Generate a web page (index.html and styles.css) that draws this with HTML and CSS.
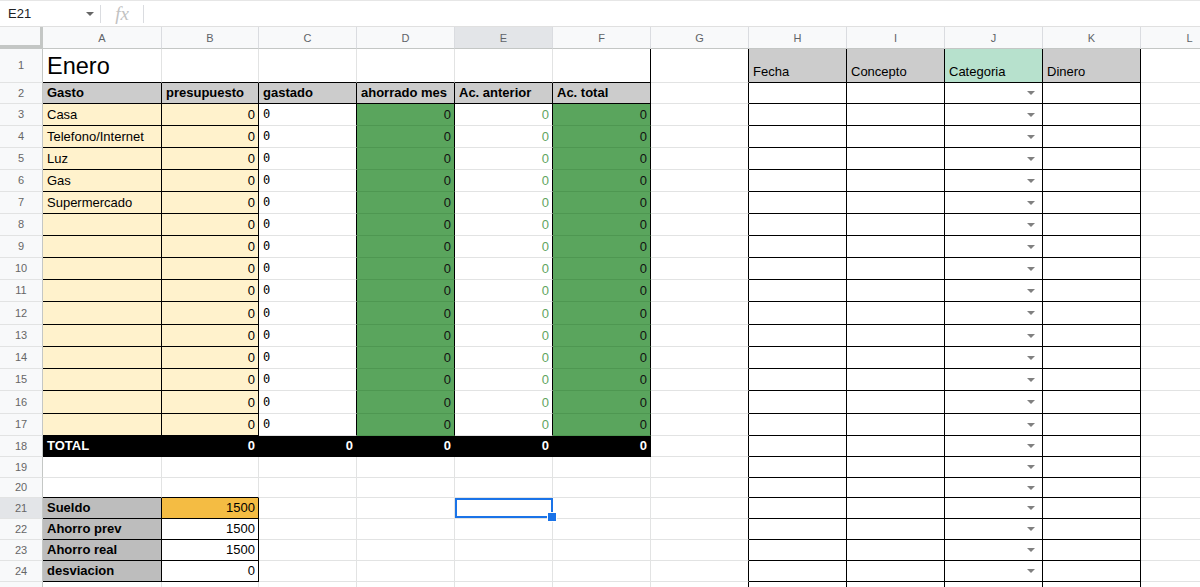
FILE: index.html
```html
<!DOCTYPE html>
<html lang="es">
<head>
<meta charset="utf-8">
<title>Enero</title>
<link rel="stylesheet" href="styles.css">
</head>
<body>
<div class="fbar">
  <div class="namebox"><span>E21</span><span class="nb-arrow"></span></div>
  <div class="sep"></div>
  <div class="fx">fx</div>
  <div class="sep"></div>
</div>
<div class="sheet">
  <div class="corner"></div><div class="ch">A</div><div class="ch">B</div><div class="ch">C</div><div class="ch">D</div><div class="ch hl">E</div><div class="ch">F</div><div class="ch">G</div><div class="ch">H</div><div class="ch">I</div><div class="ch">J</div><div class="ch">K</div><div class="ch">L</div>

  <div class="rh">1</div><div class="c b big">Enero</div><div class="c b"></div><div class="c b"></div><div class="c b"></div><div class="c b"></div><div class="c b r"></div><div class="c r"></div><div class="c hd r b">Fecha</div><div class="c hd r b">Concepto</div><div class="c lg r b">Categoria</div><div class="c hd r b">Dinero</div><div class="c"></div>

  <div class="rh">2</div><div class="c gr bd r b">Gasto</div><div class="c gr bd r b">presupuesto</div><div class="c gr bd r b">gastado</div><div class="c gr bd r b">ahorrado mes</div><div class="c gr bd r b">Ac. anterior</div><div class="c gr bd r b">Ac. total</div><div class="c r"></div><div class="c r b"></div><div class="c r b"></div><div class="c r b dd"><span class="arr"></span></div><div class="c r b"></div><div class="c"></div>

  <div class="rh">3</div><div class="c y r b">Casa</div><div class="c y r b n">0</div><div class="c r m">0</div><div class="c g r n">0</div><div class="c r n gt">0</div><div class="c g r n">0</div><div class="c r"></div><div class="c r b"></div><div class="c r b"></div><div class="c r b dd"><span class="arr"></span></div><div class="c r b"></div><div class="c"></div>

  <div class="rh">4</div><div class="c y r b">Telefono/Internet</div><div class="c y r b n">0</div><div class="c r m">0</div><div class="c g r n">0</div><div class="c r n gt">0</div><div class="c g r n">0</div><div class="c r"></div><div class="c r b"></div><div class="c r b"></div><div class="c r b dd"><span class="arr"></span></div><div class="c r b"></div><div class="c"></div>

  <div class="rh">5</div><div class="c y r b">Luz</div><div class="c y r b n">0</div><div class="c r m">0</div><div class="c g r n">0</div><div class="c r n gt">0</div><div class="c g r n">0</div><div class="c r"></div><div class="c r b"></div><div class="c r b"></div><div class="c r b dd"><span class="arr"></span></div><div class="c r b"></div><div class="c"></div>

  <div class="rh">6</div><div class="c y r b">Gas</div><div class="c y r b n">0</div><div class="c r m">0</div><div class="c g r n">0</div><div class="c r n gt">0</div><div class="c g r n">0</div><div class="c r"></div><div class="c r b"></div><div class="c r b"></div><div class="c r b dd"><span class="arr"></span></div><div class="c r b"></div><div class="c"></div>

  <div class="rh">7</div><div class="c y r b">Supermercado</div><div class="c y r b n">0</div><div class="c r m">0</div><div class="c g r n">0</div><div class="c r n gt">0</div><div class="c g r n">0</div><div class="c r"></div><div class="c r b"></div><div class="c r b"></div><div class="c r b dd"><span class="arr"></span></div><div class="c r b"></div><div class="c"></div>

  <div class="rh">8</div><div class="c y r b"></div><div class="c y r b n">0</div><div class="c r m">0</div><div class="c g r n">0</div><div class="c r n gt">0</div><div class="c g r n">0</div><div class="c r"></div><div class="c r b"></div><div class="c r b"></div><div class="c r b dd"><span class="arr"></span></div><div class="c r b"></div><div class="c"></div>

  <div class="rh">9</div><div class="c y r b"></div><div class="c y r b n">0</div><div class="c r m">0</div><div class="c g r n">0</div><div class="c r n gt">0</div><div class="c g r n">0</div><div class="c r"></div><div class="c r b"></div><div class="c r b"></div><div class="c r b dd"><span class="arr"></span></div><div class="c r b"></div><div class="c"></div>

  <div class="rh">10</div><div class="c y r b"></div><div class="c y r b n">0</div><div class="c r m">0</div><div class="c g r n">0</div><div class="c r n gt">0</div><div class="c g r n">0</div><div class="c r"></div><div class="c r b"></div><div class="c r b"></div><div class="c r b dd"><span class="arr"></span></div><div class="c r b"></div><div class="c"></div>

  <div class="rh">11</div><div class="c y r b"></div><div class="c y r b n">0</div><div class="c r m">0</div><div class="c g r n">0</div><div class="c r n gt">0</div><div class="c g r n">0</div><div class="c r"></div><div class="c r b"></div><div class="c r b"></div><div class="c r b dd"><span class="arr"></span></div><div class="c r b"></div><div class="c"></div>

  <div class="rh">12</div><div class="c y r b"></div><div class="c y r b n">0</div><div class="c r m">0</div><div class="c g r n">0</div><div class="c r n gt">0</div><div class="c g r n">0</div><div class="c r"></div><div class="c r b"></div><div class="c r b"></div><div class="c r b dd"><span class="arr"></span></div><div class="c r b"></div><div class="c"></div>

  <div class="rh">13</div><div class="c y r b"></div><div class="c y r b n">0</div><div class="c r m">0</div><div class="c g r n">0</div><div class="c r n gt">0</div><div class="c g r n">0</div><div class="c r"></div><div class="c r b"></div><div class="c r b"></div><div class="c r b dd"><span class="arr"></span></div><div class="c r b"></div><div class="c"></div>

  <div class="rh">14</div><div class="c y r b"></div><div class="c y r b n">0</div><div class="c r m">0</div><div class="c g r n">0</div><div class="c r n gt">0</div><div class="c g r n">0</div><div class="c r"></div><div class="c r b"></div><div class="c r b"></div><div class="c r b dd"><span class="arr"></span></div><div class="c r b"></div><div class="c"></div>

  <div class="rh">15</div><div class="c y r b"></div><div class="c y r b n">0</div><div class="c r m">0</div><div class="c g r n">0</div><div class="c r n gt">0</div><div class="c g r n">0</div><div class="c r"></div><div class="c r b"></div><div class="c r b"></div><div class="c r b dd"><span class="arr"></span></div><div class="c r b"></div><div class="c"></div>

  <div class="rh">16</div><div class="c y r b"></div><div class="c y r b n">0</div><div class="c r m">0</div><div class="c g r n">0</div><div class="c r n gt">0</div><div class="c g r n">0</div><div class="c r"></div><div class="c r b"></div><div class="c r b"></div><div class="c r b dd"><span class="arr"></span></div><div class="c r b"></div><div class="c"></div>

  <div class="rh">17</div><div class="c y r b"></div><div class="c y r b n">0</div><div class="c r m">0</div><div class="c g r n">0</div><div class="c r n gt">0</div><div class="c g r n">0</div><div class="c r"></div><div class="c r b"></div><div class="c r b"></div><div class="c r b dd"><span class="arr"></span></div><div class="c r b"></div><div class="c"></div>

  <div class="rh">18</div><div class="c k">TOTAL</div><div class="c k n">0</div><div class="c k n">0</div><div class="c k n">0</div><div class="c k n">0</div><div class="c k n">0</div><div class="c r"></div><div class="c r b"></div><div class="c r b"></div><div class="c r b dd"><span class="arr"></span></div><div class="c r b"></div><div class="c"></div>

  <div class="rh">19</div><div class="c"></div><div class="c"></div><div class="c"></div><div class="c"></div><div class="c"></div><div class="c"></div><div class="c r"></div><div class="c r b"></div><div class="c r b"></div><div class="c r b dd"><span class="arr"></span></div><div class="c r b"></div><div class="c"></div>

  <div class="rh">20</div><div class="c b"></div><div class="c b"></div><div class="c"></div><div class="c"></div><div class="c"></div><div class="c"></div><div class="c r"></div><div class="c r b"></div><div class="c r b"></div><div class="c r b dd"><span class="arr"></span></div><div class="c r b"></div><div class="c"></div>

  <div class="rh hl">21</div><div class="c dg bd r b">Sueldo</div><div class="c o r b n">1500</div><div class="c"></div><div class="c"></div><div class="c sel"></div><div class="c"></div><div class="c r"></div><div class="c r b"></div><div class="c r b"></div><div class="c r b dd"><span class="arr"></span></div><div class="c r b"></div><div class="c"></div>

  <div class="rh">22</div><div class="c dg bd r b">Ahorro prev</div><div class="c r b n">1500</div><div class="c"></div><div class="c"></div><div class="c"></div><div class="c"></div><div class="c r"></div><div class="c r b"></div><div class="c r b"></div><div class="c r b dd"><span class="arr"></span></div><div class="c r b"></div><div class="c"></div>

  <div class="rh">23</div><div class="c dg bd r b">Ahorro real</div><div class="c r b n">1500</div><div class="c"></div><div class="c"></div><div class="c"></div><div class="c"></div><div class="c r"></div><div class="c r b"></div><div class="c r b"></div><div class="c r b dd"><span class="arr"></span></div><div class="c r b"></div><div class="c"></div>

  <div class="rh">24</div><div class="c dg bd r b">desviacion</div><div class="c r b n">0</div><div class="c"></div><div class="c"></div><div class="c"></div><div class="c"></div><div class="c r"></div><div class="c r b"></div><div class="c r b"></div><div class="c r b dd"><span class="arr"></span></div><div class="c r b"></div><div class="c"></div>

  <div class="rh">25</div><div class="c"></div><div class="c"></div><div class="c"></div><div class="c"></div><div class="c"></div><div class="c"></div><div class="c r"></div><div class="c r b"></div><div class="c r b"></div><div class="c r b dd"><span class="arr"></span></div><div class="c r b"></div><div class="c"></div>
</div>
</body>
</html>
```

FILE: styles.css
```css
* { box-sizing: border-box; }
html, body { margin: 0; padding: 0; }
body {
  width: 1200px;
  height: 587px;
  overflow: hidden;
  background: #fff;
  color: #000;
  font-family: "Liberation Sans", Arial, sans-serif;
}

/* formula bar */
.fbar {
  height: 27px;
  display: flex;
  align-items: center;
  border-top: 1px solid #e6e6e6;
  border-bottom: 1px solid #e0e0e0;
}
.namebox {
  width: 100px;
  display: flex;
  align-items: center;
  justify-content: space-between;
  padding: 0 6px 0 8px;
  font-size: 13px;
  color: #202124;
}
.nb-arrow {
  width: 0;
  height: 0;
  border-left: 4px solid transparent;
  border-right: 4px solid transparent;
  border-top: 4px solid #666;
}
.sep { width: 1px; height: 18px; background: #dadce0; }
.fx {
  width: 42px;
  text-align: center;
  font-family: "Liberation Serif", serif;
  font-style: italic;
  font-size: 19px;
  line-height: 20px;
  color: #c2c2c2;
}

/* grid */
.sheet {
  display: grid;
  grid-template-columns: 43px 119px 97px repeat(10, 98px);
  grid-template-rows: 22px 34px 21px repeat(9, 22px) 23px repeat(3, 22px) 23px 22px 21px 21px 20px 21px 21px 21px 21px 21px;
}
.corner {
  background: #f8f9fa;
  border-right: 3px solid #c4c7c5;
  border-bottom: 4px solid #c4c7c5;
}
.ch {
  background: #f8f9fa;
  border-right: 1px solid #dadce0;
  border-bottom: 1px solid #c4c7c5;
  display: flex;
  align-items: center;
  justify-content: center;
  font-size: 11px;
  color: #5f6368;
}
.rh {
  background: #f8f9fa;
  border-right: 1px solid #c4c7c5;
  border-bottom: 1px solid #e2e3e3;
  display: flex;
  align-items: center;
  justify-content: center;
  font-size: 11px;
  color: #666;
  padding-bottom: 1px;
  overflow: hidden;
}
.hl { background: #e3e5e8; }

.c {
  border-right: 1px solid #e2e3e3;
  border-bottom: 1px solid #e2e3e3;
  display: flex;
  align-items: flex-end;
  padding: 0 3px 3px 4px;
  font-size: 13px;
  line-height: 15px;
  white-space: nowrap;
  overflow: hidden;
}
.n { justify-content: flex-end; }
.y { background: #fff2cc; }
.g { background: #5aa55d; border-bottom-color: #4e9751; color: #111; }
.gr { background: #cccccc; }
.hd { background: #cccccc; }
.dg { background: #bdbdbd; }
.o { background: #f4bc43; }
.lg { background: #b7e1cd; }
.k {
  background: #000;
  color: #fff;
  font-weight: bold;
  border-right-color: #000;
  border-bottom-color: #000;
}
.bd { font-weight: bold; }
.r { border-right-color: #000; }
.b { border-bottom-color: #000; }
.m { font-family: "DejaVu Sans Mono", monospace; font-size: 12px; }
.gt { color: #5fa560; }
.big { font-size: 23.5px; line-height: 27px; padding-bottom: 2px; }

.dd { justify-content: flex-end; align-items: center; padding: 0 7px 0 0; }
.arr {
  width: 0;
  height: 0;
  border-left: 4px solid transparent;
  border-right: 4px solid transparent;
  border-top: 4px solid #808080;
}

.sel { position: relative; overflow: visible; z-index: 2; }
.sel::before {
  content: "";
  position: absolute;
  left: 0;
  top: 0;
  right: -1px;
  bottom: 0;
  border: 2px solid #1a73e8;
}
.sel::after {
  content: "";
  position: absolute;
  right: -5px;
  bottom: -4px;
  width: 8px;
  height: 8px;
  background: #1a73e8;
  border: 1px solid #fff;
}
```
